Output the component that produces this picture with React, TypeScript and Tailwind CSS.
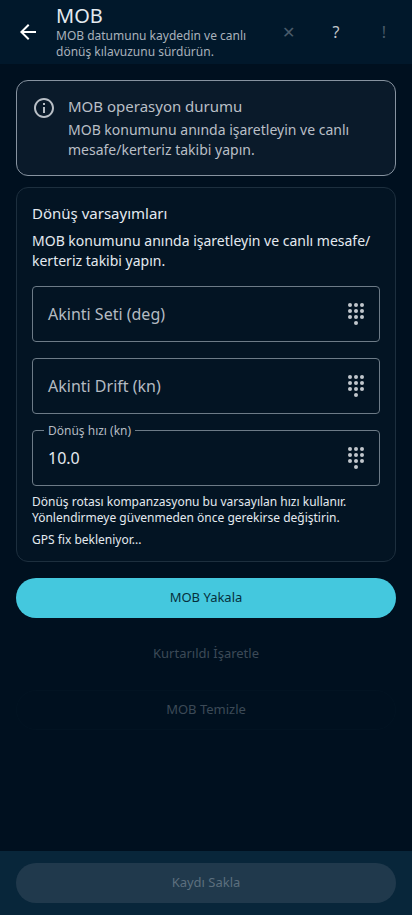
import { useState } from "react";

const BackIcon = () => (
  <svg viewBox="0 0 24 24" className="h-6 w-6" fill="currentColor">
    <path d="M20 11H7.83l5.59-5.59L12 4l-8 8 8 8 1.41-1.41L7.83 13H20v-2z" />
  </svg>
);

const InfoIcon = () => (
  <svg viewBox="0 0 24 24" className="h-6 w-6 shrink-0" fill="currentColor">
    <path d="M11 7h2v2h-2zm0 4h2v6h-2zm1-9C6.48 2 2 6.48 2 12s4.48 10 10 10 10-4.48 10-10S17.52 2 12 2zm0 18c-4.41 0-8-3.59-8-8s3.59-8 8-8 8 3.59 8 8-3.59 8-8 8z" />
  </svg>
);

const DialpadIcon = () => (
  <svg viewBox="0 0 24 24" className="h-6 w-6" fill="currentColor">
    {[3, 9, 15].map((y) =>
      [6, 12, 18].map((x) => <circle key={`${x}-${y}`} cx={x} cy={y} r="2" />)
    )}
    <circle cx="12" cy="21" r="2" />
  </svg>
);

type FieldProps = {
  id: string;
  label: string;
  initial?: string;
};

const NumberField = ({ id, label, initial = "" }: FieldProps) => {
  const [value, setValue] = useState(initial);

  return (
    <div className="relative flex h-14 items-center rounded border border-[#6d7b87]">
      <label
        htmlFor={id}
        className={
          value
            ? "absolute -top-2 left-[11px] bg-[#031423] px-1 text-xs text-[#b4bbc2]"
            : "absolute left-[15px] text-base text-[#b4bbc2]"
        }
      >
        {label}
      </label>
      <input
        id={id}
        inputMode="decimal"
        value={value}
        onChange={(e) => setValue(e.target.value)}
        className="h-full min-w-0 flex-1 bg-transparent pl-[15px] text-base text-[#e4eaf0] outline-none"
      />
      <button
        type="button"
        aria-label={label}
        className="flex h-12 w-[46px] items-center justify-center text-[#c1c6cc]"
      >
        <DialpadIcon />
      </button>
    </div>
  );
};

const App = () => {
  return (
    <div className="flex min-h-screen flex-col bg-[#00101f] font-['Noto_Sans',sans-serif] text-[#e4eaf0]">
      <header className="flex h-16 items-center bg-[#01182b] px-1">
        <button
          type="button"
          aria-label="Geri"
          className="flex h-12 w-12 shrink-0 items-center justify-center text-white"
        >
          <BackIcon />
        </button>
        <div className="min-w-0 flex-1 pl-1">
          <h1 className="text-xl leading-6">MOB</h1>
          <p className="text-xs text-[#a9b2bb]">
            MOB datumunu kaydedin ve canlı dönüş kılavuzunu sürdürün.
          </p>
        </div>
        <div className="flex shrink-0 text-base">
          <button type="button" disabled className="h-12 w-12 text-[#4a5b6a]">
            ✕
          </button>
          <button type="button" className="h-12 w-12 text-[#c1c6cc]">
            ?
          </button>
          <button type="button" disabled className="h-12 w-12 text-[#4a5b6a]">
            !
          </button>
        </div>
      </header>

      <main className="flex flex-1 flex-col gap-4 p-4">
        <div className="flex flex-col gap-[11px]">
          <section className="flex gap-3 rounded-xl border border-[#8793a0] bg-[#0a1a2a] p-[15px] text-[#b9bfc6]">
            <InfoIcon />
            <div>
              <h2 className="text-[15px] leading-5">MOB operasyon durumu</h2>
              <p className="mt-1 text-sm">
                MOB konumunu anında işaretleyin ve canlı mesafe/kerteriz takibi
                yapın.
              </p>
            </div>
          </section>

          <section className="flex flex-col rounded-xl border border-[#1d2f3e] bg-[#031423] p-[15px] pb-[13px]">
            <h2 className="text-[15px] leading-5">Dönüş varsayımları</h2>
            <p className="mt-2 text-sm">
              MOB konumunu anında işaretleyin ve canlı mesafe/
              <wbr />
              kerteriz takibi yapın.
            </p>
            <div className="mt-[15px] flex flex-col gap-4">
              <NumberField id="set" label="Akinti Seti (deg)" />
              <NumberField id="drift" label="Akinti Drift (kn)" />
              <NumberField id="speed" label="Dönüş hızı (kn)" initial="10.0" />
            </div>
            <p className="mt-2 text-xs">
              Dönüş rotası kompanzasyonu bu varsayılan hızı kullanır.
              Yönlendirmeye güvenmeden önce gerekirse değiştirin.
            </p>
            <p className="mt-1.5 text-xs">GPS fix bekleniyor...</p>
          </section>
        </div>

        <button
          type="button"
          className="h-10 rounded-full bg-[#44c8de] text-[13px] text-[#06303c]"
        >
          MOB Yakala
        </button>
        <button
          type="button"
          disabled
          className="h-10 rounded-full text-[13px] text-[#3c4a57]"
        >
          Kurtarıldı İşaretle
        </button>
        <button
          type="button"
          disabled
          className="h-10 rounded-full border border-[#021322] text-[13px] text-[#3c4a57]"
        >
          MOB Temizle
        </button>
      </main>

      <footer className="flex bg-[#08263a] px-4 py-3">
        <button
          type="button"
          disabled
          className="h-10 flex-1 rounded-full bg-[#20394c] text-[13px] text-[#5c6f7e]"
        >
          Kaydı Sakla
        </button>
      </footer>
    </div>
  );
};

export default App;
